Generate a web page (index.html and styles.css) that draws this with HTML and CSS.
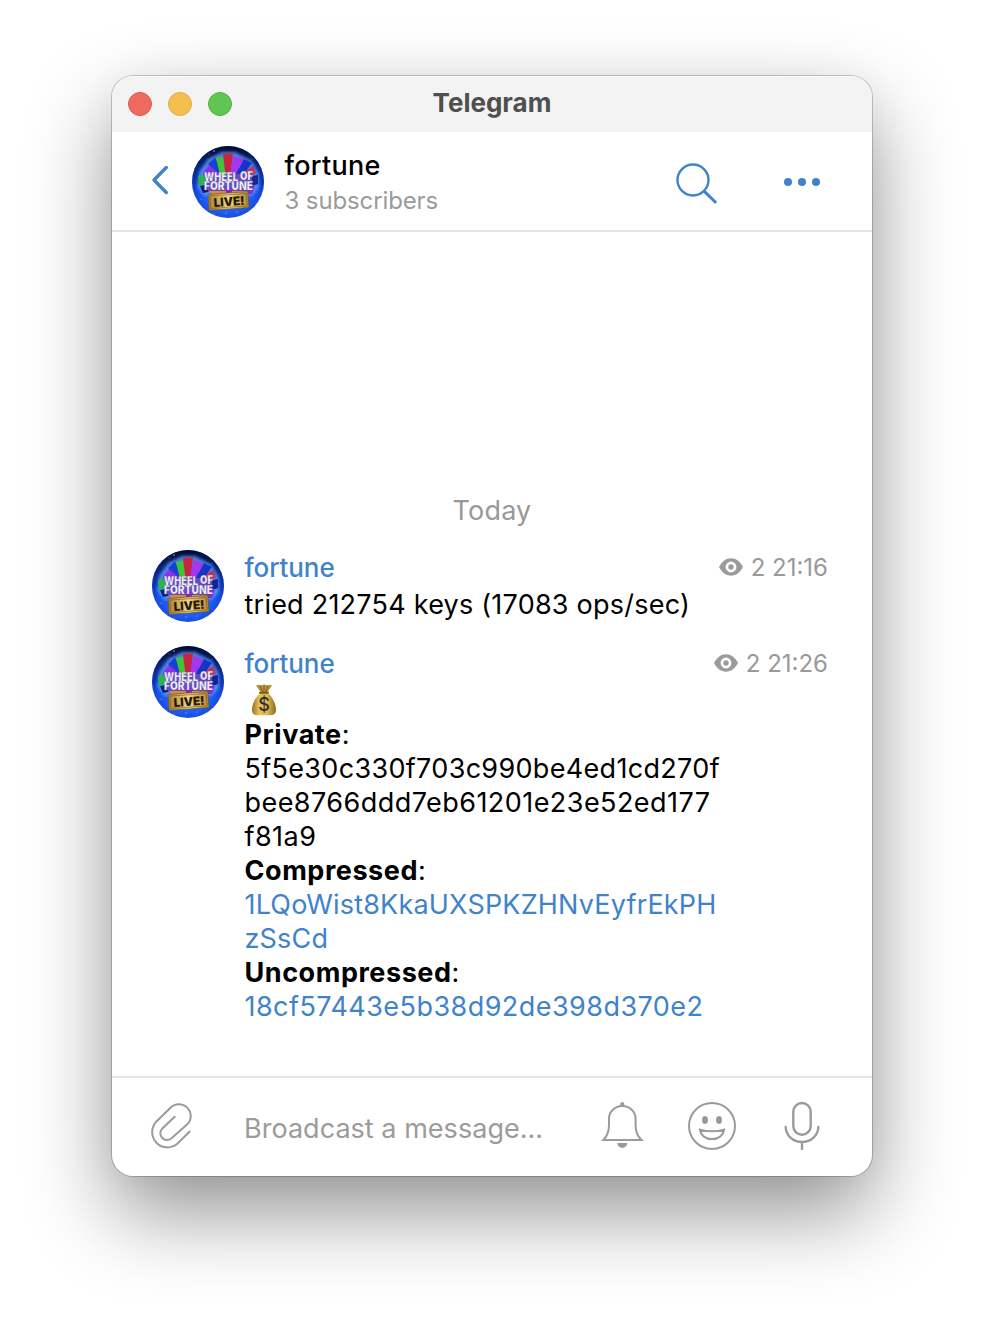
FILE: index.html
```html
<!DOCTYPE html>
<html lang="en">
<head>
<meta charset="utf-8">
<title>Telegram</title>
<link rel="stylesheet" href="styles.css">
</head>
<body>
<svg class="defs" width="0" height="0" aria-hidden="true">
  <defs>
    <radialGradient id="sky" cx="50%" cy="55%" r="55%">
      <stop offset="0" stop-color="#5c9dff"/><stop offset=".6" stop-color="#2262f4"/><stop offset="1" stop-color="#0f3fd8"/>
    </radialGradient>
    <linearGradient id="night" x1="0" y1="0" x2="0" y2="1">
      <stop offset="0" stop-color="#020a30"/><stop offset=".14" stop-color="#03123f" stop-opacity=".85"/><stop offset=".5" stop-color="#041c80" stop-opacity=".45"/><stop offset=".75" stop-color="#1040e0" stop-opacity="0"/>
    </linearGradient>
    <linearGradient id="gold" x1="0" y1="0" x2="1" y2="0">
      <stop offset="0" stop-color="#a9823a"/><stop offset=".5" stop-color="#f3d587"/><stop offset="1" stop-color="#b3883b"/>
    </linearGradient>
    <linearGradient id="bag" x1="0" y1="0" x2="1" y2="0">
      <stop offset="0" stop-color="#94701f"/><stop offset=".3" stop-color="#e5c45c"/><stop offset=".65" stop-color="#dcb74f"/><stop offset="1" stop-color="#8d6a22"/>
    </linearGradient>
    <filter id="glow" x="-20%" y="-20%" width="140%" height="140%"><feGaussianBlur stdDeviation="1.600"/></filter>
    <symbol id="avatar" viewBox="0 0 72 72">
      <clipPath id="round"><circle cx="36" cy="36" r="36"/></clipPath>
      <g clip-path="url(#round)">
        <rect width="72" height="72" fill="url(#sky)"/>
        <rect width="72" height="72" fill="url(#night)"/>
        <path d="M5 41L7 26 16 13 30 6H43L60 15 67 28V42L60 50H12Z" fill="#5b9bff" opacity=".8" filter="url(#glow)"/>
        <path d="M12 28L24 22H54L62 30 60 46H14Z" fill="#6a45c8"/>
        <path d="M6 30L12 28 14 39 7 39Z" fill="#2bb545"/>
        <path d="M8 40L14 39 16 46 11 47Z" fill="#101d6e"/>
        <path d="M11 27L18 18 30 30H12Z" fill="#8c2fe6"/>
        <path d="M16 18L23 11.500 31 28 25 26Z" fill="#163fd6"/>
        <path d="M24 12L31 10.500 34 29H28Z" fill="#42c234"/>
        <path d="M31 7.500H41L38.500 28H33.500Z" fill="#c9243f"/>
        <path d="M41.500 10L52 13 43 28H38Z" fill="#a436f0"/>
        <path d="M52 13L60 17 52 28H44Z" fill="#1534c8"/>
        <path d="M50 28L61 20 64 28Z" fill="#cf2c4b"/>
        <path d="M60 30L66 29V38L60 40Z" fill="#142690"/>
        <path d="M56 42L63 40 60 48H54Z" fill="#8a2bd6"/>
        <path d="M17 45H56L52 50H22Z" fill="#e08a33"/>
        <path d="M34 44H40V50H34Z" fill="#8a22c4"/>
        <g class="logo-type">
          <text x="12" y="34.700" textLength="34" lengthAdjust="spacingAndGlyphs">WHEEL</text>
          <text x="48" y="34.200" textLength="13" lengthAdjust="spacingAndGlyphs">OF</text>
          <text x="12" y="44" textLength="49" lengthAdjust="spacingAndGlyphs">FORTUNE</text>
        </g>
        <g transform="rotate(-4 36.500 55)">
          <rect x="16.500" y="47" width="40" height="16" fill="url(#gold)" stroke="#6d4d17" stroke-width=".6"/>
          <rect x="18.300" y="48.800" width="36.400" height="12.400" fill="none" stroke="#7d5a1f" stroke-width=".6"/>
          <text class="logo-live" x="21.500" y="59.900" textLength="31" lengthAdjust="spacingAndGlyphs">LIVE!</text>
        </g>
        <g fill="#b9d2ff"><circle cx="22" cy="5" r=".7"/><circle cx="17" cy="8" r=".4"/><circle cx="60" cy="13" r=".4"/><circle cx="22" cy="68" r=".6"/><circle cx="34" cy="67" r=".6"/><circle cx="45" cy="66" r=".5"/><circle cx="9" cy="53" r=".5"/></g>
      </g>
    </symbol>
    <symbol id="eye" viewBox="0 0 24 18">
      <path fill-rule="evenodd" d="M0 9C3 3.500 7 .3 12 .3S21 3.500 24 9C21 14.500 17 17.700 12 17.700S3 14.500 0 9ZM12 3.600A5.400 5.400 0 1 0 12 14.400 5.400 5.400 0 1 0 12 3.600Z"/>
      <circle cx="12" cy="9" r="2.700"/>
    </symbol>
  </defs>
</svg>

<main class="window">
  <header class="titlebar">
    <div class="lights"><i class="light red"></i><i class="light yellow"></i><i class="light green"></i></div>
    <h1 class="title">Telegram</h1>
  </header>

  <section class="chat-header">
    <svg class="back" width="20" height="30" viewBox="0 0 20 30"><path d="M16.300 2.500L4 15L16.300 27.500"/></svg>
    <svg class="avatar"><use href="#avatar"/></svg>
    <div class="peer">
      <div class="peer-name">fortune</div>
      <div class="peer-status">3 subscribers</div>
    </div>
    <svg class="search" width="44" height="44" viewBox="0 0 44 44"><circle cx="19" cy="19" r="15.500"/><path class="handle" d="M30.300 30.300L41.300 41"/></svg>
    <svg class="more" width="36" height="8" viewBox="0 0 36 8"><circle cx="4" cy="4" r="4"/><circle cx="18" cy="4" r="4"/><circle cx="32" cy="4" r="4"/></svg>
  </section>

  <section class="history">
    <div class="day">Today</div>
    <article class="message">
      <svg class="avatar"><use href="#avatar"/></svg>
      <div class="content">
        <div class="meta">
          <span class="author">fortune</span>
          <svg class="eye" width="24" height="18"><use href="#eye"/></svg>
          <span class="time">2 21:16</span>
        </div>
        <div class="line">tried 212754 keys (17083 ops/sec)</div>
      </div>
    </article>
    <article class="message">
      <svg class="avatar"><use href="#avatar"/></svg>
      <div class="content">
        <div class="meta">
          <span class="author">fortune</span>
          <svg class="eye" width="24" height="18"><use href="#eye"/></svg>
          <span class="time">2 21:26</span>
        </div>
        <div class="line emoji">
          <svg width="26" height="32" viewBox="0 0 26 32">
            <path d="M5 1.500Q8 .2 10 1.200Q13 0 16 1.200Q19 .2 21 1.500L16.500 8H9.500Z" fill="#b8923c"/>
            <path d="M9 2L11.500 8M13 2V8M17 2L15 8" stroke="#806019" fill="none"/>
            <path d="M9 9H17C21 13 25 19 25 26Q25 31 20 31.300H6Q1 31 1 26C1 19 5 13 9 9Z" fill="url(#bag)"/>
            <path d="M9 8.800H17" stroke="#7d5c1d" stroke-width="2" stroke-linecap="round"/>
            <text class="dollar" x="13" y="27" text-anchor="middle">$</text>
          </svg>
        </div>
        <div class="line"><b>Private</b>:</div>
        <div class="line key">5f5e30c330f703c990be4ed1cd270f</div>
        <div class="line hex">bee8766ddd7eb61201e23e52ed177</div>
        <div class="line hex">f81a9</div>
        <div class="line"><b>Compressed</b>:</div>
        <div class="line link address">1LQoWist8KkaUXSPKZHNvEyfrEkPH</div>
        <div class="line link address">zSsCd</div>
        <div class="line"><b>Uncompressed</b>:</div>
        <div class="line link hex">18cf57443e5b38d92de398d370e2</div>
      </div>
    </article>
  </section>

  <footer class="composer">
    <svg class="clip" width="44" height="50" viewBox="0 0 44 50"><path d="M40.700 30.500L28.300 42.800A15.300 15.300 0 0 1 6.700 21.300L21.500 6.700A11.800 11.800 0 0 1 38.300 23.300L22.800 37.100A6.600 6.600 0 0 1 13.300 27.500L25.700 15.700"/></svg>
    <div class="placeholder">Broadcast a message...</div>
    <svg class="bell" width="44" height="50" viewBox="0 0 44 50"><path d="M3.300 40C7.500 36 9 31 9 25V18.500A13.300 12.500 0 0 1 35.600 18.500V25C35.600 31 37.100 36 41.500 40Z"/><path class="fill" d="M20.300 6V4A2 2 0 0 1 24.300 4V6ZM17.300 43H27.300A5 5 0 0 1 17.300 43Z"/></svg>
    <svg class="smile" width="48" height="48" viewBox="0 0 48 48"><circle cx="24" cy="24" r="23"/><path d="M12 27.700Q24 31 36 27.700C35.500 33.500 30 37.100 24 37.100S12.500 33.500 12 27.700Z"/><g class="fill"><ellipse cx="17" cy="18" rx="3" ry="4"/><ellipse cx="31" cy="18" rx="3" ry="4"/></g></svg>
    <svg class="mic" width="36" height="50" viewBox="0 0 36 50"><rect x="9.300" y="3" width="17.400" height="31.700" rx="8.700"/><path d="M1.700 27A16.300 15 0 0 0 34.300 27M18 42V49"/></svg>
  </footer>
</main>
</body>
</html>
```
FILE: styles.css
```css
* { box-sizing: border-box; }
body {
  margin: 0;
  width: 984px;
  height: 1324px;
  padding: 76px 112px 148px;
  overflow: hidden;
  background: #fff;
  font-family: Inter, "Liberation Sans", sans-serif;
  font-size: 26px;
  color: #000;
}
svg { display: block; flex: none; }
.defs { position: absolute; }
.window {
  width: 760px;
  height: 1100px;
  display: flex;
  flex-direction: column;
  overflow: hidden;
  border-radius: 21px;
  background: #fff;
  box-shadow: 0 0 0 1px rgba(0, 0, 0, .2), 0 36px 84px rgba(0, 0, 0, .43), 0 0 40px rgba(0, 0, 0, .03);
}
.titlebar {
  height: 56px;
  flex: none;
  display: grid;
  grid-template-columns: 124px 1fr 124px;
  align-items: center;
  background: #f3f3f3;
  box-shadow: inset 0 1px #fafafa;
}
.lights { display: flex; gap: 16px; padding-left: 16px; }
.light { width: 24px; height: 24px; border-radius: 50%; border: 1px solid; }
.red { background: #ed6a5f; border-color: #dc5a50; }
.yellow { background: #f5bf4f; border-color: #dfa943; }
.green { background: #61c554; border-color: #52b045; }
.title { margin: 0; text-align: center; font-size: 26px; font-weight: 700; line-height: 54px; height: 56px; color: #4f4f4f; }
.chat-header {
  height: 100px;
  flex: none;
  display: flex;
  align-items: center;
  padding: 2px 52px 0 38px;
  border-bottom: 2px solid #e6e6e6;
}
.back, .search { fill: none; stroke: #3f83ca; stroke-width: 2.400; stroke-linecap: round; stroke-linejoin: round; }
.back { stroke-width: 3.400; margin: 0 22px 4px 0; }
.search { margin-top: 1px; }
.handle { stroke-width: 3; }
.more { fill: #3f83ca; margin-left: 66px; }
.avatar { width: 72px; height: 72px; }
.logo-type { font: 900 11.500px Inter, sans-serif; fill: #f1f2fb; stroke: #39406e; stroke-width: .25; }
.logo-live { font: 900 12px Inter, sans-serif; fill: #29190a; }
.peer { flex: 1; padding: 2px 0 0 20.500px; }
.peer-name { font-size: 27px; font-weight: 500; line-height: 36px; letter-spacing: .25px; }
.peer-status { font-size: 24px; line-height: 34px; letter-spacing: -.12px; color: #9b9b9b; }
.history { flex: 1; display: flex; flex-direction: column; padding: 262px 44px 0 40px; }
.day { height: 34px; font-size: 27px; line-height: 33px; letter-spacing: .2px; text-align: center; margin-left: 4px; color: #999; }
.message { display: flex; gap: 20px; margin-top: 22px; }
.message + .message { margin-top: 24px; }
.content { flex: 1; padding-left: .5px; }
.meta { display: flex; align-items: center; height: 38px; padding-bottom: 4px; color: #999; fill: #9b9b9b; }
.author { flex: 1; color: #3f83ca; font-weight: 500; letter-spacing: -.1px; }
.time { font-size: 24px; margin-left: 8px; }
.line { height: 34px; font-size: 27px; line-height: 34px; letter-spacing: .23px; }
.line b { font-weight: 700; letter-spacing: .55px; }
.key { letter-spacing: .32px; }
.hex { letter-spacing: .45px; }
.address { letter-spacing: .19px; }
.link { color: #3f83ca; }
.emoji { padding-left: 6px; }
.dollar { font: 500 18px Inter, sans-serif; fill: #2e2c28; letter-spacing: 0; }
.composer {
  height: 100px;
  flex: none;
  display: flex;
  align-items: center;
  border-top: 2px solid #e6e6e6;
  padding: 0 52px 2px 37px;
  color: #9b9b9b;
  fill: none;
  stroke: #9b9b9b;
  stroke-width: 2;
}
.fill { fill: #9b9b9b; stroke: none; }
.clip, .mic { stroke-linecap: round; }
.placeholder { flex: 1; font-size: 27px; letter-spacing: .03px; padding: 5px 0 0 51px; }
.bell, .mic { margin-bottom: 2px; }
.smile { margin: 0 0 1px 44px; }
.mic { margin-left: 48px; stroke-width: 2.400; }
```
